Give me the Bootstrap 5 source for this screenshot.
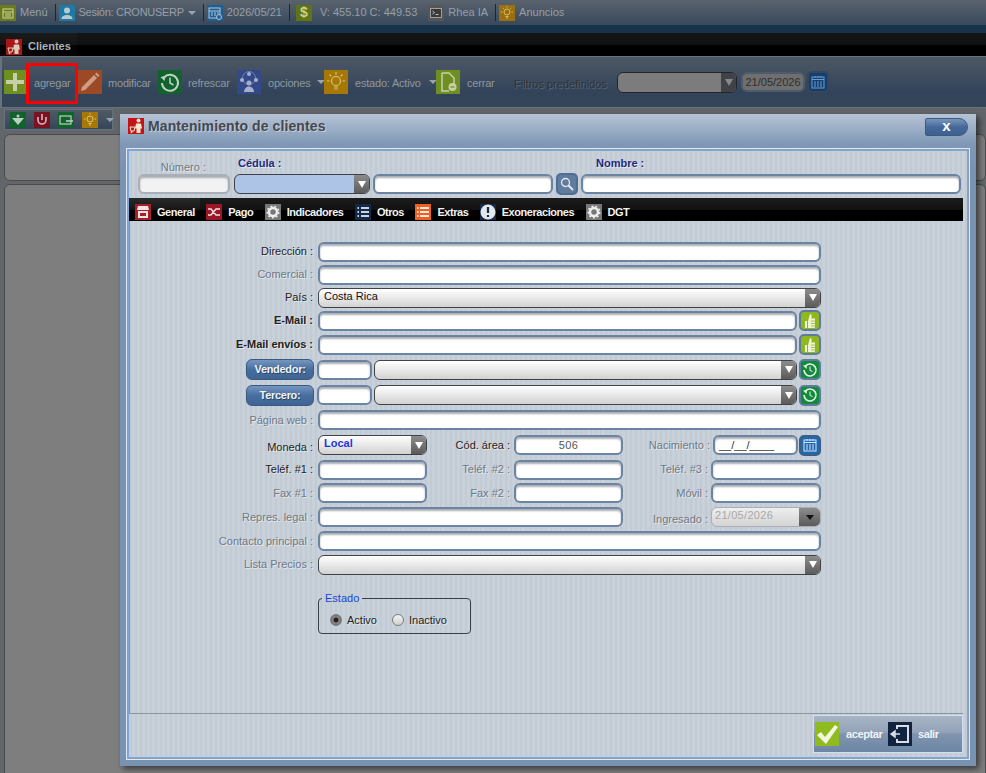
<!DOCTYPE html>
<html lang="en">
<head>
<meta charset="UTF-8">
<title>Clientes</title>
<link href="https://cdn.jsdelivr.net/npm/bootstrap@5.3.0/dist/css/bootstrap.min.css" rel="stylesheet">
<style>
html, body { width: 986px; height: 773px; overflow: hidden; margin: 0; }
body { font-family: "Liberation Sans", Arial, sans-serif; font-size: 12px; background: #5d5d5d; position: relative; color: #222; }
svg { display: block; flex: none; }

/* icon tiles */
.ico16 { width: 16px; height: 16px; display: flex; align-items: center; justify-content: center; flex: none; }
.ico24 { width: 24px; height: 24px; display: flex; align-items: center; justify-content: center; flex: none; }
.ico22w { width: 22px; }
.c-olive { background: #6c7a1f; }
.c-teal { background: #1f7aa3; }
.c-cal { background: #1f5f93; }
.c-money { background: #5f7416; color: #c7d199; font-weight: bold; font-size: 14px; }
.c-term { background: #555; }
.c-amber { background: #a57808; }
.c-darkamber { background: #99700d; }
.c-red { background: #a81616; }
.c-brightred { background: #c21414; }
.c-lime { background: #6f9020; }
.c-rust { background: #9c4a25; }
.c-green { background: #12622e; }
.c-indigo { background: #344a88; }
.c-maroon { background: #7a1221; }
.c-store { background: #a5202b; }
.c-shuffle { background: #9a1626; }
.c-gear { background: #777; }
.c-navy { background: #12294a; }
.c-orange { background: #ef5f22; }
.c-okay { background: #8fbb1e; }
.c-exit { background: #12233f; }

/* top bar */
.topbar { height: 25px; background: linear-gradient(#5a636d, #37495c); color: #979fa7; font-size: 11px; }
.topbar .sep { width: 1px; height: 17px; background: #1c2630; margin: 0 3px 0 7px; }
.topbar .sep-wide { margin-right: 6px; }
.topbar .sep-none { background: transparent; margin: 0 4px 0 6px; }
.topbar .t { white-space: nowrap; }
.t-tight { letter-spacing: -.28px; }
.gap-4px { margin-right: 4px; }
.caret-d { width: 0; height: 0; border-left: 4px solid transparent; border-right: 4px solid transparent; border-top: 4px solid #9aa2aa; display: inline-block; flex: none; }
.bluestrip { height: 8px; background: #16334a; }
.tabband { height: 23px; background: linear-gradient(#151515 0, #101010 12px, #000 12px); }
.clientes-tab { width: 77px; height: 23px; background: linear-gradient(#1a1a1a 0, #141414 12px, #040404 12px); color: #a8b3be; font-weight: bold; font-size: 11px; padding: 5px 0 0 6px; gap: 6px; }
.clientes-tx { padding-bottom: 2px; }

/* toolbar */
.toolbar { height: 52px; background: linear-gradient(#4d5864, #33445a 70%, #344558); border: 1px solid #66737f; border-width: 1px 0 1px 2px; padding-left: 2px; color: #8f979f; font-size: 11px; letter-spacing: -.2px; }
.tool-lb { white-space: nowrap; flex: none; padding-top: 2px; }
.lb-agregar { margin-left: 8px; width: 44px; }
.lb-modificar { margin-left: 6px; width: 50px; }
.lb-refrescar { margin-left: 6px; width: 49px; }
.lb-opciones { margin-left: 7px; width: 49px; }
.lb-estado { margin-left: 7px; width: 74px; }
.lb-cerrar { margin-left: 7px; width: 47px; }
.lb-filtros { width: 103px; color: #2e343a; text-shadow: 1px 1px 0 #59636f; letter-spacing: 0; padding-top: 5px; }
.pull-1 { margin-left: -1px; }
.filtro-combo { width: 120px; height: 21px; border: 1px solid #22262b; border-radius: 6px; overflow: hidden; background: #7c7c7c; flex: none; }
.filtro-arr { width: 15px; background: #3f4347; }
.filtro-date { width: 64px; height: 20px; margin-left: 4px; border: 2px solid #4d5c6c; border-radius: 6px; background: #6f6f6f; color: #2e2e2e; letter-spacing: 0; flex: none; }
.filtro-cal { width: 22px; height: 22px; margin-left: 2px; border: 2px solid #38465a; border-radius: 5px; background: #123f72; flex: none; }

/* background panels */
.subbar { background: #62666a; height: 665px; padding: 1px 0 0 4px; }
.subtools { width: 109px; height: 21px; background: linear-gradient(#4f5a66, #35465a); border: 1px solid #66737f; gap: 8px; padding-left: 5px; }
.ghostbox { border: 1px solid #4a4c4f; border-radius: 6px; background: #7e7e7e; width: 982px; }
.ghost-a { height: 47px; margin-top: 4px; }
.ghost-b { height: 595px; margin-top: 3px; }

/* window */
.winbox { position: absolute; left: 120px; top: 114px; width: 856px; height: 652px; background: linear-gradient(#b6c3d5 0, #8098b6 30px, #7892b2 60px); box-shadow: 3px 3px 6px rgba(0,0,0,.55); padding: 34px 6px 0 6px; }
.wintitle { position: absolute; left: 8px; top: 4px; height: 16px; gap: 4px; font-size: 14px; letter-spacing: .1px; font-weight: bold; color: #44484e; text-shadow: 1px 1px 0 #c3cedc; }
.winclose { position: absolute; right: 8px; top: 4px; width: 43px; height: 18px; background: linear-gradient(#7896bb, #46699a 50%, #3f6192); border: 1px solid #3a5a85; border-radius: 2px 9px 9px 2px; color: #fff; font-weight: bold; font-size: 15px; line-height: 13px; text-align: center; }
.wininner { height: 612px; border: 1px solid #dfe7f0; box-shadow: inset 0 0 0 1px #8aa0bb, inset 0 0 0 2px #7da7db; background: repeating-linear-gradient(90deg, #c8d0d9 0 3px, #c2cad4 3px 5px); padding: 2px 6px 0 2px; display: flex; flex-direction: column; }

/* fields */
.fld { height: 20px; border: 2px solid #6c84a4; border-radius: 6px; background: #fff; box-shadow: inset 0 2px 2px #a9adb2; flex: none; font-size: 11px; line-height: 16px; }
.fld.off { background: #f2f2f2; border-color: #a9afb7; }
.combo { height: 20px; border: 1px solid #3f4347; border-radius: 6px; background: linear-gradient(#fff, #d2d2d2); display: flex; align-items: stretch; overflow: hidden; flex: none; }
.combo .val { flex: 1; padding-left: 5px; font-size: 11px; line-height: 15px; color: #111; }
.combo .arr { width: 15px; background: linear-gradient(#8c8c8c, #5b5b5b); display: flex; align-items: center; justify-content: center; flex: none; }
.tri { width: 0; height: 0; border-left: 4px solid transparent; border-right: 4px solid transparent; border-top: 7px solid #fff; }
.tri-dim { border-top-color: #888; }
.w-55 { width: 55px; }
.w-85 { width: 85px; }
.w-109 { width: 109px; }
.w-110 { width: 110px; }
.w-305 { width: 305px; }
.w-cmb { width: 423px; margin-left: 2px; }
.w-479 { width: 479px; }
.w-503 { width: 503px; }
.lbl { color: #6f7885; font-size: 11px; text-align: right; white-space: nowrap; flex: none; text-shadow: 1px 1px 0 #e4e8ec; }
.lbl.dark { color: #222; }
.lbl.bolder { color: #222; font-weight: bold; }
.lbl.navy { color: #1e2a7e; font-weight: bold; text-align: left; }

/* header of the window */
.headlabels { height: 23px; align-items: flex-end; }
.lb-numero { width: 77px; margin-bottom: -1px; }
.lb-cedula { margin-left: 32px; width: 358px; padding-bottom: 3px; }
.lb-nombre { padding-bottom: 3px; }
.headfields { height: 20px; padding-left: 9px; }
.hf-numero { width: 92px; }
.combo.hf-combo { width: 136px; margin-left: 4px; background: #aec4e6; }
.hf-cedula { width: 180px; margin-left: 3px; }
.sidebtn.hf-search { width: 22px; height: 22px; margin-left: 3px; background: #5f7b9d; border-color: #4f6e96; }
.hf-nombre { width: 380px; margin-left: 3px; }

/* tabs */
.tabstrip { height: 23px; background: linear-gradient(#1c1c1c 0, #111 12px, #000 12px); color: #f2f2f2; font-size: 11px; font-weight: bold; letter-spacing: -.45px; margin-top: 4px; padding-left: 6px; gap: 11.400px; flex: none; }
.tabstrip .tb { gap: 6px; white-space: nowrap; height: 23px; padding-top: 5px; }
.tabstrip .tb.on { background: linear-gradient(#2a2a2a, #151515 12px, #000 12px); margin-left: -6px; padding: 5px 5px 0 6px; margin-right: -5px; }

/* form */
.formarea { height: 493px; padding-top: 19px; border-left: 1px solid #8b939c; border-bottom: 1px solid #8b939c; flex: none; }
.frow { height: 24px; display: flex; align-items: center; }
.r23 { height: 23px; }
.r25 { height: 25px; }
.r26 { height: 26px; }
.frow > .lbl:first-child { width: 188px; padding-right: 5px; }
.col-b { width: 87px; padding-right: 4px; }
.col-c { width: 88px; padding-right: 3px; }
.col-n { width: 90px; padding-right: 3px; }
.drop-2 { position: relative; top: 2px; }
.sidebtn { width: 22px; height: 21px; border: 2px solid #5f7ca0; border-radius: 5px; background: #8fb81f; display: flex; align-items: center; justify-content: center; flex: none; margin-left: 2px; }
.sidebtn.grn { background: #138a3a; }
.sidebtn.blu { background: #1f69b0; border-color: #3c5f86; margin-left: 1px; }
.bluebtn { width: 68px; height: 21px; border: 1px solid #3b5a82; border-radius: 6px; background: linear-gradient(#7596bf, #486e9f 50%, #3f6494); color: #f0f4f8; font-weight: bold; font-size: 11px; letter-spacing: -.3px; line-height: 19px; text-align: center; flex: none; margin-left: 116px; margin-right: 3px; text-shadow: 1px 1px 0 #2b4566; }
.val-local { color: #1d35e0 !important; font-weight: bold; }
.fld-area { text-align: center; color: #555; letter-spacing: .3px; }
.fld-date { padding-left: 4px; color: #333; }
.combo-off { border-color: #a9afb7; background: linear-gradient(#eee, #d4d4d4); }
.combo-off .val { color: #a8a8a8; padding-left: 3px; letter-spacing: .3px; }
.combo-off .arr { width: 21px; }
.tri-black { border-top-color: #111; border-top-width: 5px; }
.estado { width: 153px; height: 36px; border: 1px solid #3a3f45; border-radius: 4px; margin: 22px 0 0 188px; position: relative; padding: 15px 0 0 11px; gap: 5px; }
.estado .leg { position: absolute; top: -8px; left: 3px; padding: 0 3px; background: #c6ced7; color: #1347d6; font-size: 11px; line-height: 14px; }
.rad { width: 12px; height: 12px; border-radius: 50%; border: 1px solid #7c7c7c; background: linear-gradient(#f4f4f4, #cfcfcf); flex: none; }
.rad.sel { background: radial-gradient(circle, #222 0 2px, #8a8a8a 3px, #666 6px); }
.estado .lbl { line-height: 12px; }
.mr-10 { margin-right: 10px; }

/* footer */
.footline { height: 43px; flex: none; position: relative; }
.footbtns { position: absolute; right: 0; top: 1px; width: 150px; height: 38px; border: 1px solid #cfe0f5; background: linear-gradient(#a8b4c4, #93a3b8 45%, #8094ad 50%, #6d86a6); color: #f0f3f7; font-size: 11px; font-weight: bold; letter-spacing: -.4px; padding-left: 1px; }
.lb-aceptar { margin-left: 7px; width: 42px; }
.lb-salir { margin-left: 6px; }

.redmark { position: absolute; left: 26px; top: 63px; width: 52px; height: 41px; border: 3px solid #f00; }
</style>
</head>
<body>

<div class="topbar d-flex align-items-center">
  <span class="ico16 c-olive gap-4px"><svg width="12" height="12" viewBox="0 0 12 12"><rect x="1" y="2" width="10" height="9" fill="none" stroke="#cfd6a0"/><path d="M1 5h10M3 7h6M3 9h6" stroke="#cfd6a0"/></svg></span>
  <span class="t">Menú</span><span class="sep"></span>
  <span class="ico16 c-teal gap-4px"><svg width="14" height="14" viewBox="0 0 14 14"><circle cx="7" cy="4.500" r="3" fill="#b9c9d2"/><path d="M1.500 13c0-3 3-4 5.500-4s5.500 1 5.500 4z" fill="#b9c9d2"/></svg></span>
  <span class="t t-tight gap-4px">Sesión: CRONUSERP</span><span class="caret-d"></span><span class="sep"></span>
  <span class="ico16 c-cal gap-4px"><svg width="14" height="14" viewBox="0 0 14 14"><rect x="1" y="2" width="11" height="10" fill="none" stroke="#b6c6d2"/><path d="M1 5h11M3 7h2M6 7h2M9 7h2M3 9h2M6 9h2" stroke="#b6c6d2"/><circle cx="11" cy="11" r="2.500" fill="#1f5f93" stroke="#b6c6d2"/></svg></span>
  <span class="t">2026/05/21</span><span class="sep sep-wide"></span>
  <span class="ico16 c-money">$</span>
  <span class="t ms-2">V: 455.10 C: 449.53</span><span class="sep sep-none"></span>
  <span class="ico16 c-term gap-4px"><svg width="12" height="12" viewBox="0 0 12 12"><rect x=".5" y="1.500" width="11" height="9" fill="#3a3a3a" stroke="#a0a0a0"/><path d="M2.500 4l2 1.500-2 1.500M5.500 7.500h3" stroke="#c0c0c0" fill="none"/></svg></span>
  <span class="t">Rhea IA</span><span class="sep"></span>
  <span class="ico16 c-darkamber gap-4px"><svg width="14" height="14" viewBox="0 0 14 14"><circle cx="7" cy="6" r="3" fill="none" stroke="#d6b86a"/><path d="M5.500 10.500h3M6 12h2M7 0v1.500M1 6h1.500M11.500 6H13M2.800 1.800l1 1M11.200 1.800l-1 1" stroke="#d6b86a"/></svg></span>
  <span class="t">Anuncios</span>
</div>
<div class="bluestrip"></div>
<div class="tabband">
  <div class="clientes-tab d-flex align-items-center">
    <span class="ico16 c-red"><svg width="16" height="16" viewBox="0 0 16 16"><circle cx="10.500" cy="2.500" r="2" fill="#d9ccb8"/><path d="M8 5.500h5l1 5h-1.500V15h-4v-4.500H7z" fill="#d9ccb8"/><path d="M2 9h5l-1 4H3z" fill="none" stroke="#d9ccb8"/><circle cx="3.500" cy="14" r="1" fill="#d9ccb8"/></svg></span>
    <span class="clientes-tx">Clientes</span>
  </div>
</div>

<div class="toolbar d-flex align-items-center">
  <span class="ico24 ico22w c-lime"><svg width="20" height="20" viewBox="0 0 20 20"><path d="M8 1h4v7h7v4h-7v7H8v-7H1V8h7z" fill="#c6cfa8"/></svg></span>
  <span class="tool-lb lb-agregar">agregar</span>
  <span class="ico24 c-rust"><svg width="22" height="22" viewBox="0 0 22 22"><path d="M3 16L15 4l3 3L6 19l-4 1zM16 3l1.500-1.500 3 3L19 6z" fill="#cf9c86"/></svg></span>
  <span class="tool-lb lb-modificar">modificar</span>
  <span class="ico24 c-green"><svg width="22" height="22" viewBox="0 0 22 22"><path d="M5 6.500a8 8 0 1 1-2 5.500" fill="none" stroke="#bfd2c4" stroke-width="2"/><path d="M1.500 6l5-1-1 5z" fill="#bfd2c4"/><path d="M11 6.500v5.500l3.500 2" fill="none" stroke="#bfd2c4" stroke-width="1.500"/></svg></span>
  <span class="tool-lb lb-refrescar">refrescar</span>
  <span class="ico24 c-indigo"><svg width="22" height="22" viewBox="0 0 22 22"><circle cx="11" cy="7" r="6.500" fill="none" stroke="#6f7fae"/><circle cx="11" cy="3" r="2" fill="#a6b0cc"/><circle cx="4" cy="9" r="2" fill="#a6b0cc"/><circle cx="18" cy="9" r="2" fill="#a6b0cc"/><circle cx="11" cy="12" r="2.500" fill="#a6b0cc"/><path d="M6 21c0-3 2-5.500 5-5.500s5 2.500 5 5.500z" fill="#a6b0cc"/></svg></span>
  <span class="tool-lb lb-opciones">opciones</span><span class="caret-d"></span>
  <span class="ico24 c-amber pull-1"><svg width="20" height="20" viewBox="0 0 20 20"><circle cx="10" cy="9" r="4.500" fill="none" stroke="#dcc272" stroke-width="1.200"/><path d="M8 15h4M8.500 17h3M10 0v2.500M1 9h2.500M16.500 9H19M3.500 2.500l1.800 1.800M16.500 2.500l-1.800 1.800" stroke="#dcc272" stroke-width="1.200"/></svg></span>
  <span class="tool-lb lb-estado">estado: Activo</span><span class="caret-d"></span>
  <span class="ico24 c-lime pull-1"><svg width="20" height="20" viewBox="0 0 20 20"><path d="M4 1h7l5 5v6M4 1v18h7" fill="none" stroke="#c6cfa8" stroke-width="1.500"/><circle cx="14.500" cy="15" r="4" fill="#c6cfa8"/><path d="M12.500 15h4" stroke="#6f9020" stroke-width="1.200"/></svg></span>
  <span class="tool-lb lb-cerrar">cerrar</span>
  <span class="tool-lb lb-filtros">Filtros predefinidos</span>
  <span class="filtro-combo d-flex"><span class="flex-grow-1"></span><span class="filtro-arr d-flex align-items-center justify-content-center"><span class="tri tri-dim"></span></span></span>
  <span class="filtro-date d-flex align-items-center justify-content-center">21/05/2026</span>
  <span class="filtro-cal d-flex align-items-center justify-content-center"><svg width="14" height="14" viewBox="0 0 14 14"><rect x="1" y="2" width="12" height="11" fill="none" stroke="#6d9bc6"/><path d="M1 4.500h12M4 1v2M7 1v2M10 1v2M4 6v6M7 6v6M10 6v6" stroke="#6d9bc6"/></svg></span>
</div>

<div class="subbar">
  <div class="subtools d-flex align-items-center">
    <span class="ico16 c-green"><svg width="14" height="14" viewBox="0 0 14 14"><path d="M1 5h12L7 12z" fill="#bcd0c2"/><circle cx="7" cy="3" r="1.500" fill="#bcd0c2"/></svg></span>
    <span class="ico16 c-maroon"><svg width="14" height="14" viewBox="0 0 14 14"><path d="M3 4v3a4 4 0 0 0 8 0V4" fill="none" stroke="#d6b6bb" stroke-width="1.600"/><path d="M7 1v6" stroke="#d6b6bb" stroke-width="1.600"/></svg></span>
    <span class="ico16 c-green"><svg width="14" height="14" viewBox="0 0 14 14"><rect x="1" y="3" width="11" height="8" fill="none" stroke="#bcd0c2" stroke-width="1.200"/><path d="M7 8h7" stroke="#bcd0c2" stroke-width="1.600"/></svg></span>
    <span class="ico16 c-amber"><svg width="14" height="14" viewBox="0 0 14 14"><circle cx="7" cy="6" r="3" fill="none" stroke="#dcc272"/><path d="M5.500 10.500h3M6 12h2M7 0v1.500M1 6h1.500M11.500 6H13" stroke="#dcc272"/></svg></span>
    <span class="caret-d"></span>
  </div>
  <div class="ghostbox ghost-a"></div>
  <div class="ghostbox ghost-b"></div>
</div>

<div class="winbox">
  <div class="wintitle d-flex align-items-center">
    <span class="ico16 c-brightred"><svg width="16" height="16" viewBox="0 0 16 16"><circle cx="10.500" cy="2.500" r="2" fill="#f2e6d2"/><path d="M8 5.500h5l1 5h-1.500V15h-4v-4.500H7z" fill="#f2e6d2"/><path d="M2 9h5l-1 4H3z" fill="none" stroke="#f2e6d2"/><circle cx="3.500" cy="14" r="1" fill="#f2e6d2"/></svg></span>
    Mantenimiento de clientes
  </div>
  <div class="winclose">x</div>

  <div class="wininner">
    <div class="headlabels d-flex">
      <span class="lbl lb-numero">Número :</span>
      <span class="lbl navy lb-cedula">Cédula :</span>
      <span class="lbl navy lb-nombre">Nombre :</span>
    </div>
    <div class="headfields d-flex align-items-center">
      <span class="fld off hf-numero"></span>
      <span class="combo hf-combo"><span class="val"></span><span class="arr"><span class="tri"></span></span></span>
      <span class="fld hf-cedula"></span>
      <span class="sidebtn hf-search"><svg width="14" height="14" viewBox="0 0 14 14"><circle cx="5.500" cy="5.500" r="4" fill="none" stroke="#e4e9ee" stroke-width="1.300"/><path d="M8.500 8.500l4.500 4.500" stroke="#e4e9ee" stroke-width="2"/></svg></span>
      <span class="fld hf-nombre"></span>
    </div>

    <div class="tabstrip d-flex align-items-center">
      <span class="tb on d-flex align-items-center"><span class="ico16 c-store"><svg width="14" height="14" viewBox="0 0 14 14"><path d="M2 1h10l1 4H1z" fill="#f2e2e2"/><path d="M3 7h8v5H3z" fill="none" stroke="#f2e2e2" stroke-width="2"/></svg></span>General</span>
      <span class="tb d-flex align-items-center"><span class="ico16 c-shuffle"><svg width="14" height="14" viewBox="0 0 14 14"><path d="M1 4h3l5 6h4M1 10h3l5-6h4" fill="none" stroke="#f2e2e2" stroke-width="1.500"/></svg></span>Pago</span>
      <span class="tb d-flex align-items-center"><span class="ico16 c-gear"><svg width="14" height="14" viewBox="0 0 14 14"><circle cx="7" cy="7" r="4" fill="none" stroke="#eee" stroke-width="2.500"/><circle cx="7" cy="7" r="5.800" fill="none" stroke="#eee" stroke-width="1.400" stroke-dasharray="2 2"/></svg></span>Indicadores</span>
      <span class="tb d-flex align-items-center"><span class="ico16 c-navy"><svg width="14" height="14" viewBox="0 0 14 14"><path d="M5 3h8M5 7h8M5 11h8M1.500 3h1.500M1.500 7h1.500M1.500 11h1.500" stroke="#c9d2dd" stroke-width="2"/></svg></span>Otros</span>
      <span class="tb d-flex align-items-center"><span class="ico16 c-orange"><svg width="14" height="14" viewBox="0 0 14 14"><path d="M4 3h9M4 7h9M4 11h9M1 3h1.500M1 7h1.500M1 11h1.500" stroke="#fde9dc" stroke-width="2"/></svg></span>Extras</span>
      <span class="tb d-flex align-items-center"><span class="ico16 c-navy"><svg width="16" height="16" viewBox="0 0 16 16"><circle cx="8" cy="8" r="7.500" fill="#e3e6ea"/><path d="M8 3v6M8 11v2" stroke="#12294a" stroke-width="2.200"/></svg></span>Exoneraciones</span>
      <span class="tb d-flex align-items-center"><span class="ico16 c-gear"><svg width="14" height="14" viewBox="0 0 14 14"><circle cx="7" cy="7" r="4" fill="none" stroke="#eee" stroke-width="2.500"/><circle cx="7" cy="7" r="5.800" fill="none" stroke="#eee" stroke-width="1.400" stroke-dasharray="2 2"/></svg></span>DGT</span>
    </div>

    <div class="formarea">
      <div class="frow r23"><span class="lbl dark">Dirección :</span><span class="fld w-503"></span></div>
      <div class="frow r23"><span class="lbl">Comercial :</span><span class="fld w-503"></span></div>
      <div class="frow r23"><span class="lbl dark">País :</span><span class="combo w-503"><span class="val">Costa Rica</span><span class="arr"><span class="tri"></span></span></span></div>
      <div class="frow r23"><span class="lbl bolder">E-Mail :</span><span class="fld w-479"></span>
        <span class="sidebtn"><svg width="12" height="16" viewBox="0 0 12 16"><path d="M1 8h2v7H1zM4 8l2-7c1.500 0 2 1.500 1.500 4.500H11v8.500a1 1 0 0 1-1 1H4z" fill="#eef4d2"/><path d="M7 8h4M7 10.500h4M7 13h4" stroke="#8fb81f" stroke-width=".8"/></svg></span></div>
      <div class="frow r25"><span class="lbl bolder">E-Mail envíos :</span><span class="fld w-479"></span>
        <span class="sidebtn"><svg width="12" height="16" viewBox="0 0 12 16"><path d="M1 8h2v7H1zM4 8l2-7c1.500 0 2 1.500 1.500 4.500H11v8.500a1 1 0 0 1-1 1H4z" fill="#eef4d2"/><path d="M7 8h4M7 10.500h4M7 13h4" stroke="#8fb81f" stroke-width=".8"/></svg></span></div>
      <div class="frow r25"><span class="bluebtn">Vendedor:</span><span class="fld w-55"></span><span class="combo w-cmb"><span class="val"></span><span class="arr"><span class="tri"></span></span></span>
        <span class="sidebtn grn"><svg width="16" height="16" viewBox="0 0 16 16"><path d="M3.500 4a6 6 0 1 1-1.500 4" fill="none" stroke="#e6f2ea" stroke-width="1.600"/><path d="M8 4.500v4l2.500 1" fill="none" stroke="#e6f2ea"/><path d="M1 3.500l4-.5-.5 4z" fill="#e6f2ea"/></svg></span></div>
      <div class="frow r26"><span class="bluebtn">Tercero:</span><span class="fld w-55"></span><span class="combo w-cmb"><span class="val"></span><span class="arr"><span class="tri"></span></span></span>
        <span class="sidebtn grn"><svg width="16" height="16" viewBox="0 0 16 16"><path d="M3.500 4a6 6 0 1 1-1.500 4" fill="none" stroke="#e6f2ea" stroke-width="1.600"/><path d="M8 4.500v4l2.500 1" fill="none" stroke="#e6f2ea"/><path d="M1 3.500l4-.5-.5 4z" fill="#e6f2ea"/></svg></span></div>
      <div class="frow"><span class="lbl">Página web :</span><span class="fld w-503"></span></div>

      <div class="frow r26"><span class="lbl dark drop-2">Moneda :</span><span class="combo w-109"><span class="val val-local">Local</span><span class="arr"><span class="tri"></span></span></span>
        <span class="lbl dark col-b">Cód. área :</span><span class="fld w-109 fld-area">506</span>
        <span class="lbl col-n">Nacimiento :</span><span class="fld w-85 fld-date">__/__/____</span>
        <span class="sidebtn blu"><svg width="14" height="14" viewBox="0 0 14 14"><rect x="1" y="2" width="12" height="11" fill="none" stroke="#d8e8f6"/><path d="M1 4.500h12M4 1v2M7 1v2M10 1v2M4 6v6M7 6v6M10 6v6" stroke="#d8e8f6"/></svg></span></div>
      <div class="frow r23"><span class="lbl dark">Teléf. #1 :</span><span class="fld w-109"></span>
        <span class="lbl col-b">Teléf. #2 :</span><span class="fld w-109"></span>
        <span class="lbl col-c">Teléf. #3 :</span><span class="fld w-110"></span></div>
      <div class="frow"><span class="lbl">Fax #1 :</span><span class="fld w-109"></span>
        <span class="lbl col-b">Fax #2 :</span><span class="fld w-109"></span>
        <span class="lbl col-c">Móvil :</span><span class="fld w-110"></span></div>
      <div class="frow"><span class="lbl">Repres. legal :</span><span class="fld w-305"></span>
        <span class="lbl col-c drop-2">Ingresado :</span>
        <span class="combo combo-off w-110"><span class="val">21/05/2026</span><span class="arr"><span class="tri tri-black"></span></span></span></div>
      <div class="frow"><span class="lbl">Contacto principal :</span><span class="fld w-503"></span></div>
      <div class="frow r23"><span class="lbl">Lista Precios :</span><span class="combo w-503"><span class="val"></span><span class="arr"><span class="tri"></span></span></span></div>

      <div class="estado d-flex">
        <span class="leg">Estado</span>
        <span class="rad sel"></span><span class="lbl dark mr-10">Activo</span>
        <span class="rad"></span><span class="lbl dark">Inactivo</span>
      </div>
    </div>

    <div class="footline">
      <div class="footbtns d-flex align-items-center">
        <span class="ico24 c-okay"><svg width="24" height="24" viewBox="0 0 24 24"><path d="M2 13l4-3 4 5L20 3l3 2-12 17z" fill="#f2f6de"/></svg></span>
        <span class="lb-aceptar">aceptar</span>
        <span class="ico24 c-exit"><svg width="22" height="22" viewBox="0 0 22 22"><path d="M8 6V3h11v16H8v-3" fill="none" stroke="#d9dee4" stroke-width="2"/><path d="M2 11h9M2 11l4-3v6z" stroke="#d9dee4" stroke-width="1.500" fill="#d9dee4"/></svg></span>
        <span class="lb-salir">salir</span>
      </div>
    </div>
  </div>
</div>

<span class="redmark"></span>
</body>
</html>
